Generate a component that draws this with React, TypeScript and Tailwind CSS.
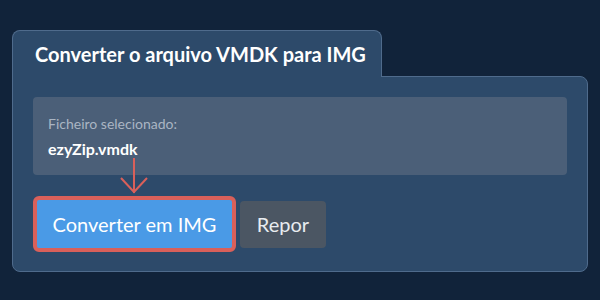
export default function App() {
  return (
    <div className="relative w-[600px] h-[300px] bg-[#11233a] px-3 pt-[30px] font-['Lato','Noto_Sans',sans-serif]">
      <div className="relative z-10 -mb-px flex h-[47px] w-[370px] items-center rounded-t-lg border border-b-0 border-[#4f6b8c] bg-[#2d4a6a] px-[22px]">
        <h1 className="whitespace-nowrap text-[20px] font-bold text-white">Converter o arquivo VMDK para IMG</h1>
      </div>
      <div className="h-[196px] rounded-b-lg rounded-tr-lg border border-[#4f6b8c] bg-[#2d4a6a] px-5 pt-5">
        <div className="flex h-[78px] flex-col justify-center rounded bg-[#4b5f78] px-[15px]">
          <p className="text-[14px] leading-5 text-[#aab5c3]">Ficheiro selecionado:</p>
          <p className="mt-[5px] text-[16px] font-bold leading-5 text-white">ezyZip.vmdk</p>
        </div>
        <div className="mt-[21px] flex items-center gap-1">
          <button className="flex h-[56px] w-[203px] items-center justify-center rounded-md border-4 border-[#d9605a] bg-[#4a9ae6] text-[20px] text-white">
            Converter em IMG
          </button>
          <button className="flex h-[47px] w-[86px] items-center justify-center rounded bg-[#4b5663] text-[20px] text-[#e8ecf0]">
            Repor
          </button>
        </div>
      </div>
      <svg
        className="absolute left-[118px] top-[156px]"
        width="32"
        height="40"
        viewBox="0 0 32 40"
        fill="none"
        stroke="#d9605a"
        strokeWidth="2"
      >
        <path d="M16 2V37" />
        <path d="M3 22L16 36L29 22" />
      </svg>
    </div>
  );
}
